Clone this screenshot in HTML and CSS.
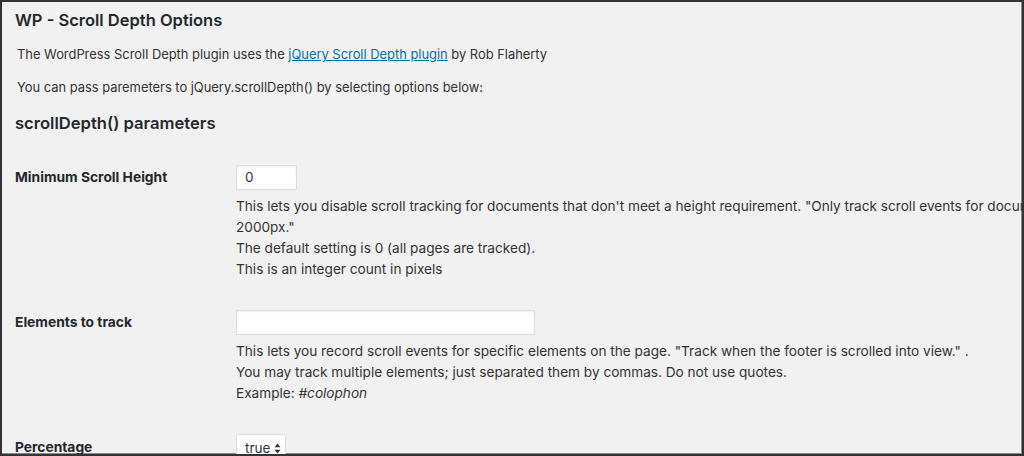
FILE: index.html
```html
<!DOCTYPE html>
<html>
<head>
<meta charset="utf-8">
<link rel="stylesheet" href="styles.css">
</head>
<body>
<div class="frame">
  <h1 class="title">WP - Scroll Depth Options</h1>
  <p class="intro">The WordPress Scroll Depth plugin uses the <a href="#" class="link">jQuery Scroll Depth plugin</a> by Rob Flaherty</p>
  <p class="intro intro-2">You can pass paremeters to jQuery.scrollDepth() by selecting options below:</p>
  <h2 class="subtitle">scrollDepth() parameters</h2>

  <div class="row">
    <div class="label">Minimum Scroll Height</div>
    <div class="field">
      <div class="input input-small">0</div>
      <div class="desc">
        <span class="line nowrap">This lets you disable scroll tracking for documents that don't meet a height requirement. "Only track scroll events for documents taller than</span>
        <span class="line">2000px."</span>
        <span class="line">The default setting is 0 (all pages are tracked).</span>
        <span class="line">This is an integer count in pixels</span>
      </div>
    </div>
  </div>

  <div class="row">
    <div class="label">Elements to track</div>
    <div class="field">
      <div class="input input-wide"></div>
      <div class="desc">
        <span class="line">This lets you record scroll events for specific elements on the page. "Track when the footer is scrolled into view." .</span>
        <span class="line">You may track multiple elements; just separated them by commas. Do not use quotes.</span>
        <span class="line">Example: <em>#colophon</em></span>
      </div>
    </div>
  </div>

  <div class="row">
    <div class="label label-last">Percentage</div>
    <div class="field">
      <div class="select">true
        <svg class="arrows" width="7" height="11" viewBox="0 0 7 11"><path d="M3.5 0.5 L6.5 4.2 H0.5 Z M3.5 10.5 L6.5 6.8 H0.5 Z" fill="#333"/></svg>
      </div>
    </div>
  </div>
</div>
</body>
</html>
```

FILE: styles.css
```css
html, body {
  margin: 0;
  padding: 0;
  background: #f1f1f1;
}
.frame {
  box-sizing: border-box;
  width: 1024px;
  height: 456px;
  border: 2px solid #333;
  box-shadow: inset -1px -1px 0 #8a8a8a;
  overflow: hidden;
  padding: 6px 0 0 13px;
  background: #f1f1f1;
  font-family: Inter, "Noto Sans", "Liberation Sans", sans-serif;
  color: #333;
  font-size: 13px;
}
.title {
  margin: 0;
  font-size: 16.5px;
  line-height: 24px;
  font-weight: 600;
  color: #23282d;
}
.intro {
  margin: 13px 0 0 0;
  padding-left: 2px;
  font-size: 12.9px;
  line-height: 20px;
  color: #333;
}
.link {
  color: #0073aa;
  text-decoration: underline;
}
.subtitle {
  margin: 13px 0 0 0;
  font-size: 16.6px;
  line-height: 24px;
  font-weight: 600;
  color: #23282d;
}
.row {
  display: flex;
  margin-top: 30px;
}
.row + .row {
  margin-top: 30px;
}
.label {
  width: 221px;
  flex: none;
  line-height: 25px;
  font-size: 13.8px;
  font-weight: 700;
  color: #23282d;
}
.label-last {
  line-height: 26px;
}
.field {
  flex: none;
  display: flex;
  flex-direction: column;
  align-items: flex-start;
}
.input {
  box-sizing: border-box;
  height: 25px;
  background: #fff;
  border: 1px solid #ddd;
  box-shadow: inset 0 1px 2px rgba(0,0,0,.07);
  padding: 0 8px;
  font-size: 13.6px;
  line-height: 23px;
  color: #32373c;
}
.input-small { width: 61px; }
.input-wide { width: 299px; }
.desc {
  margin-top: 6px;
  display: flex;
  flex-direction: column;
  font-size: 13.62px;
  line-height: 21px;
  color: #333;
}
.line { display: block; }
.nowrap { white-space: nowrap; }
.select {
  box-sizing: border-box;
  width: 50px;
  height: 28px;
  background: #fff;
  border: 1px solid #ddd;
  border-radius: 3px;
  padding: 0 0 0 8px;
  font-size: 13.6px;
  line-height: 26px;
  display: flex;
  align-items: center;
  gap: 3px;
  color: #32373c;
}
.arrows { flex: none; }
```
